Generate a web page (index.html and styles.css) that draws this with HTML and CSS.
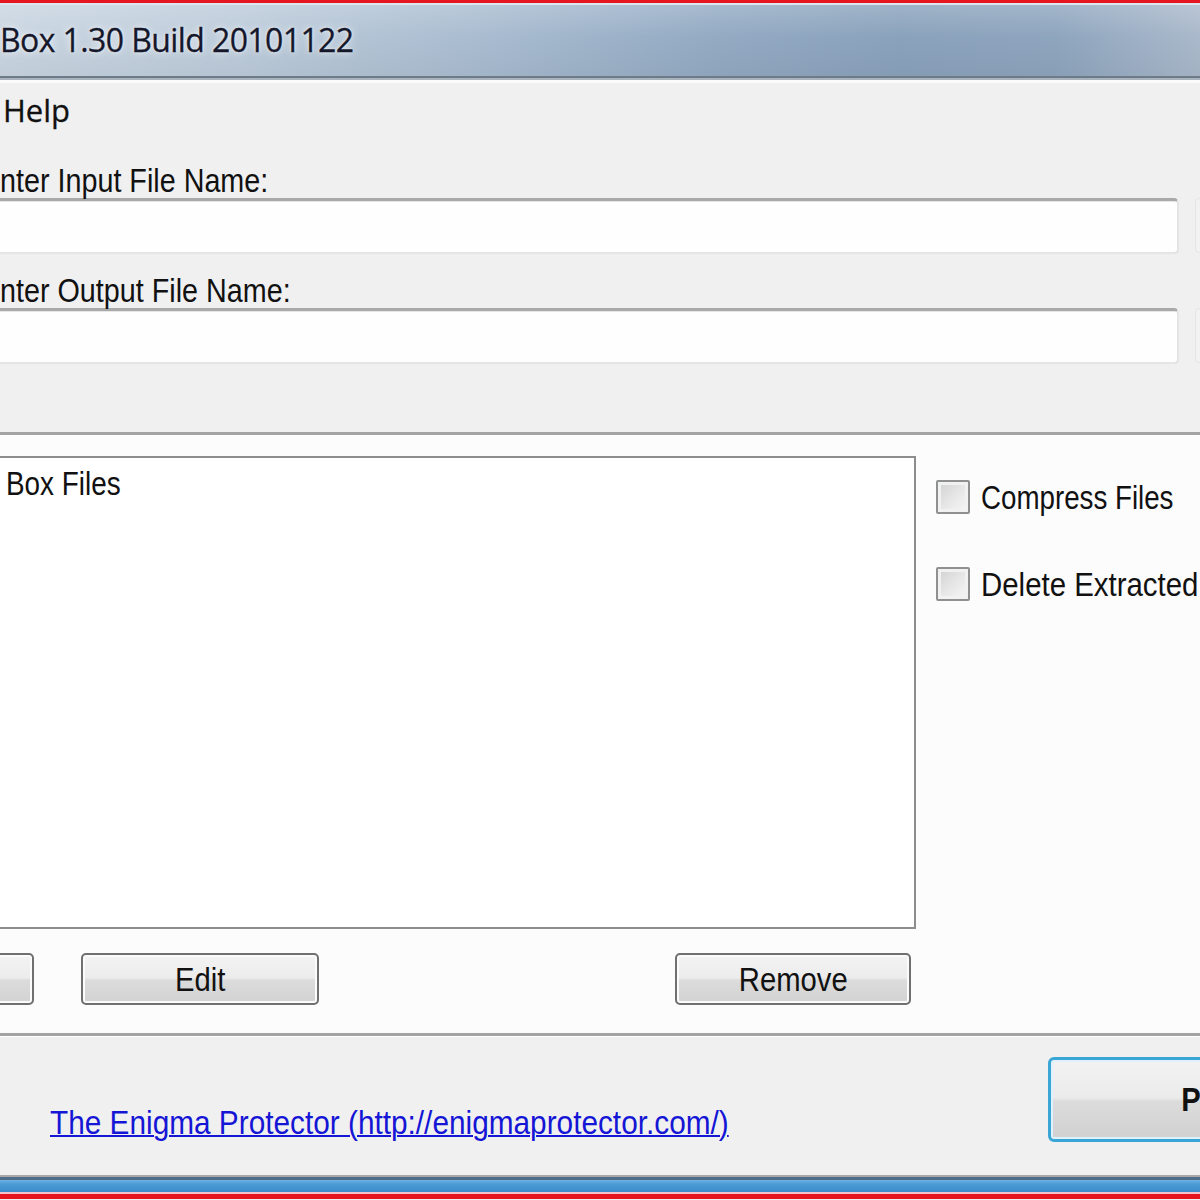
FILE: index.html
```html
<!DOCTYPE html>
<html>
<head>
<meta charset="utf-8">
<link rel="stylesheet" href="styles.css">
</head>
<body>
<div class="window">
  <div class="frame-top"></div>
  <div class="titlebar"><span class="title">Box 1.30 Build 20101122</span></div>
  <div class="titlebar-edge"></div>
  <div class="menubar"><span class="menu-item">Help</span></div>
  <div class="files-panel">
    <div class="field-label"><span class="txt">nter Input File Name:</span></div>
    <div class="field-row"><div class="textbox"></div><div class="browse"></div></div>
    <div class="field-label second"><span class="txt">nter Output File Name:</span></div>
    <div class="field-row"><div class="textbox"></div><div class="browse"></div></div>
  </div>
  <div class="separator"></div>
  <div class="tab-page">
    <div class="tab-main">
      <div class="listbox"><span class="list-item txt">Box Files</span></div>
      <div class="options">
        <div class="check"><span class="checkbox"></span><span class="check-text txt tight">Compress Files</span></div>
        <div class="check"><span class="checkbox"></span><span class="check-text txt delete">Delete Extracted</span></div>
      </div>
    </div>
    <div class="button-row">
      <button class="btn btn-cut"></button>
      <button class="btn btn-edit"><span class="btn-txt">Edit</span></button>
      <button class="btn btn-remove"><span class="btn-txt">Remove</span></button>
    </div>
  </div>
  <div class="separator"></div>
  <div class="footer">
    <a class="link txt wide" href="#">The Enigma Protector (http://enigmaprotector.com/)</a>
    <button class="btn btn-default"><span class="btn-txt">Process</span></button>
  </div>
  <div class="taskbar"></div>
</div>
</body>
</html>
```

FILE: styles.css
```css
html, body {
  margin: 0;
  padding: 0;
  background: #f0f0f0;
}
.window {
  width: 1200px;
  height: 1200px;
  overflow: hidden;
  display: flex;
  flex-direction: column;
  font-family: "Liberation Sans", Arial, sans-serif;
  color: #111;
}
.txt {
  display: inline-block;
  transform: scaleX(0.845);
  transform-origin: left center;
  white-space: nowrap;
}
.txt.tight {
  transform: scaleX(0.815);
}
.txt.delete {
  transform: scaleX(0.865);
}
.txt.wide {
  transform: scaleX(0.876);
}
.frame-top {
  height: 3px;
  background: #e5161f;
  flex: none;
}
.titlebar {
  height: 71px;
  flex: none;
  border-top: 2px solid #dde5ee;
  background:
    linear-gradient(to bottom, rgba(255,255,255,0.18) 0%, rgba(255,255,255,0) 45%, rgba(0,0,0,0.04) 100%),
    linear-gradient(to right, #c9d5e1 0%, #bccbda 20%, #a9bcd0 40%, #93aac3 60%, #8aa2bc 75%, #8ea5be 88%, #aab9cb 100%);
  display: flex;
  align-items: center;
}
.title {
  font-family: "Open Sans", "Noto Sans", sans-serif;
  font-size: 32px;
  letter-spacing: -0.6px;
  color: #15172b;
  -webkit-text-stroke: 0.3px #15172b;
  text-shadow: 0 0 8px rgba(255,255,255,0.85), 0 0 3px rgba(255,255,255,0.7);
  margin-top: -2px;
  white-space: nowrap;
}
.titlebar-edge {
  flex: none;
  border-top: 2px solid #6d7b89;
  background: #a9b3be;
  height: 2px;
  border-bottom: 3px solid #fbfbfb;
}
.menubar {
  height: 57px;
  flex: none;
  display: flex;
  align-items: center;
  padding-left: 3px;
}
.menu-item {
  font-family: "Open Sans", "Noto Sans", sans-serif;
  font-size: 31px;
  color: #111;
  -webkit-text-stroke: 0.3px #111;
  margin-top: -3px;
}
.files-panel {
  height: 292px;
  flex: none;
  display: flex;
  flex-direction: column;
}
.field-label {
  font-size: 34px;
  line-height: 40px;
  height: 40px;
  margin-top: 20px;
  margin-bottom: -2px;
  white-space: nowrap;
}
.field-label.second {
  margin-top: 17px;
}
.field-row {
  display: flex;
  gap: 17px;
  height: 55px;
  flex: none;
}
.textbox {
  width: 1188px;
  flex: none;
  margin-left: -10px;
  box-sizing: border-box;
  background: #fefefe;
  border: 1px solid #e3e4e6;
  border-top: 3px solid #a9a9a9;
  border-radius: 0 4px 4px 0;
  box-shadow: inset 0 1px 0 #e6e6e6, 1px 1px 1px rgba(0,0,0,0.05);
}
.browse {
  width: 40px;
  flex: none;
  box-sizing: border-box;
  border: 1px solid #e4e4e4;
  border-radius: 4px;
  background: #f2f2f2;
}
.separator {
  flex: none;
  height: 3px;
  background: #a3a3a3;
  border-bottom: 1px solid #ffffff;
}
.tab-page {
  height: 597px;
  flex: none;
  background: #fcfcfc;
  display: flex;
  flex-direction: column;
}
.tab-main {
  display: flex;
  margin-top: 20px;
  height: 473px;
  flex: none;
}
.listbox {
  width: 926px;
  flex: none;
  margin-left: -10px;
  box-sizing: border-box;
  border: 2px solid #8d8d8d;
  background: #ffffff;
  padding: 6px 0 0 14px;
}
.list-item {
  font-size: 33px;
  line-height: 40px;
}
.options {
  margin-left: 20px;
  padding-top: 24px;
  display: flex;
  flex-direction: column;
  gap: 53px;
  min-width: 0;
}
.check {
  display: flex;
  align-items: center;
  gap: 11px;
  height: 34px;
  white-space: nowrap;
}
.checkbox {
  width: 34px;
  height: 34px;
  box-sizing: border-box;
  border: 2px solid #8f9090;
  border-radius: 2px;
  background: linear-gradient(135deg, #d0d0d0 0%, #e6e6e6 50%, #f7f7f7 100%);
  box-shadow: inset 0 0 0 3px #f1f1f1;
  flex: none;
}
.check-text {
  font-size: 34px;
  line-height: 40px;
}
.button-row {
  display: flex;
  margin-top: 24px;
  height: 52px;
  flex: none;
}
.btn {
  font-family: "Liberation Sans", Arial, sans-serif;
  font-size: 34px;
  color: #111;
  box-sizing: border-box;
  border: 2px solid #707070;
  border-radius: 5px;
  background: linear-gradient(to bottom, #f3f3f3 0%, #ececec 48%, #dcdcdc 52%, #d2d2d2 100%);
  box-shadow: inset 0 0 0 2px #fbfbfb;
  padding: 0;
  white-space: nowrap;
  overflow: hidden;
  flex: none;
}
.btn-txt {
  display: inline-block;
  transform: scaleX(0.86);
  transform-origin: center;
}
.btn-cut {
  width: 240px;
  margin-left: -206px;
}
.btn-edit {
  width: 238px;
  margin-left: 47px;
}
.btn-remove {
  width: 236px;
  margin-left: 356px;
}
.footer {
  height: 138px;
  flex: none;
  display: flex;
  align-items: flex-start;
}
.link {
  font-size: 34px;
  color: #1515d6;
  text-decoration: underline;
  text-decoration-thickness: 2px;
  margin-left: 50px;
  margin-top: 66px;
  flex: none;
}
.btn-default {
  width: 380px;
  height: 85px;
  margin-top: 20px;
  margin-left: auto;
  margin-right: -228px;
  border: 3px solid #3aa6d6;
  border-radius: 6px;
  box-shadow: inset 0 0 0 2px #dff2fb;
  background: linear-gradient(to bottom, #f2f2f2 0%, #ebebeb 48%, #dcdcdc 52%, #d0d0d0 100%);
  font-size: 34px;
  font-weight: bold;
}
.taskbar {
  flex: none;
  height: 24px;
  background: linear-gradient(to bottom,
    #a9a9a9 0px, #a9a9a9 2px,
    #4d6d8b 2px, #4d6d8b 5px,
    #6fb2e2 5px, #4b9bd4 9px, #3d8fcc 16px, #3a8ac8 17px,
    #f4c2c8 17px, #f4c2c8 19px,
    #e5161f 19px, #e5161f 24px);
}
```
